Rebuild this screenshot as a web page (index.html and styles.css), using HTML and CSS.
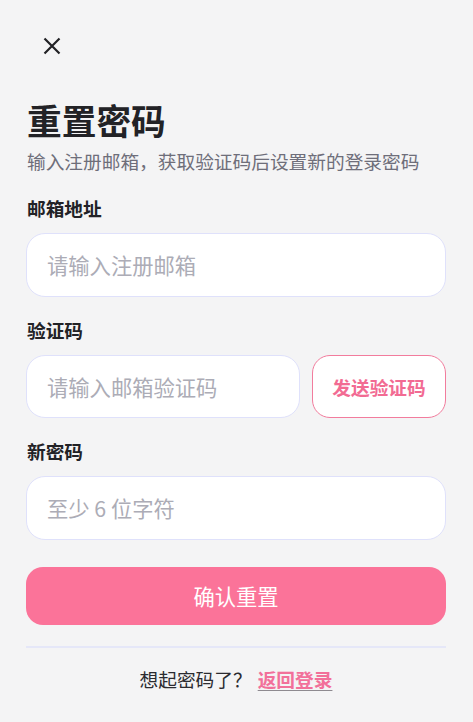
FILE: index.html
```html
<!DOCTYPE html>
<html lang="zh-CN">
<head>
<meta charset="utf-8">
<title>重置密码</title>
<link rel="stylesheet" href="styles.css">
</head>
<body>
<main class="page">
  <header class="top">
    <button class="close" type="button" aria-label="关闭">
      <svg width="18" height="18" viewBox="0 0 18 18"><path d="M1.5 1.5 L16.5 16.5 M16.5 1.5 L1.5 16.5" stroke="#222226" stroke-width="2.2" fill="none"/></svg>
    </button>
  </header>
  <h1 class="title">重置密码</h1>
  <p class="subtitle">输入注册邮箱，获取验证码后设置新的登录密码</p>
  <form class="form">
    <div class="field">
      <label class="label">邮箱地址</label>
      <input class="input" type="text" placeholder="请输入注册邮箱">
    </div>
    <div class="field">
      <label class="label">验证码</label>
      <div class="row">
        <input class="input input-code" type="text" placeholder="请输入邮箱验证码">
        <button class="send" type="button">发送验证码</button>
      </div>
    </div>
    <div class="field">
      <label class="label">新密码</label>
      <input class="input" type="password" placeholder="至少 6 位字符">
    </div>
    <button class="submit" type="button">确认重置</button>
  </form>
  <hr class="divider">
  <p class="footer">想起密码了？<a class="back" href="#">返回登录</a></p>
</main>
</body>
</html>
```
FILE: styles.css
```css
* { box-sizing: border-box; }
html, body { margin: 0; padding: 0; }
body {
  background: #f4f4f5;
  font-family: "Noto Sans CJK SC", "Noto Sans", sans-serif;
  color: #222226;
}
.page {
  padding: 30px 27px 0 26px;
  display: flex;
  flex-direction: column;
}
.top { height: 32px; display: flex; }
.close {
  width: 32px; height: 32px;
  margin-left: 10px;
  padding: 0; border: 0; background: none;
  display: flex; align-items: center; justify-content: center;
}
.title {
  margin: 36px 0 0 1px;
  font-size: 34.7px;
  line-height: 45px;
  font-weight: 700;
  color: #222226;
}
.subtitle {
  margin: 5px 0 0 1px;
  font-size: 18.7px;
  line-height: 26px;
  color: #6e6e7a;
}
.form {
  margin-top: 21px;
  display: flex;
  flex-direction: column;
  gap: 20px;
}
.field { display: flex; flex-direction: column; gap: 12px; }
.label {
  padding-left: 1px;
  font-size: 18.7px;
  line-height: 26px;
  font-weight: 700;
  color: #222226;
}
.input {
  width: 100%;
  height: 63.5px;
  border: 1.5px solid #dfe1fb;
  border-radius: 19px;
  background: #fff;
  padding: 0 20px;
  font-family: inherit;
  font-size: 21.3px;
  color: #222;
  outline: none;
}
.input::placeholder { color: #acacb6; }
.row { display: flex; gap: 12px; }
.input-code { flex: 1; width: auto; min-width: 0; }
.send {
  width: 134px;
  height: 63.5px;
  border: 1.5px solid #f27c9d;
  border-radius: 18px;
  background: #fff;
  font-family: inherit;
  font-size: 18.7px;
  font-weight: 700;
  color: #f26b93;
  padding: 0;
}
.submit {
  margin-top: 7px;
  height: 58px;
  border: 0;
  border-radius: 17px;
  background: #fb7399;
  color: #fff;
  font-family: inherit;
  font-size: 21.3px;
  padding: 0;
}
.divider {
  margin: 21px 0 0;
  border: 0;
  height: 2px;
  background: #e5e7f8;
}
.footer {
  margin: 18px 0 0;
  text-align: center;
  font-size: 18.7px;
  line-height: 26px;
  color: #2b2b30;
}
.back {
  margin-left: 6px;
  color: #f2709a;
  font-weight: 700;
  text-decoration: underline;
  text-decoration-color: #8e8a90;
  text-underline-offset: 3px;
}
```
